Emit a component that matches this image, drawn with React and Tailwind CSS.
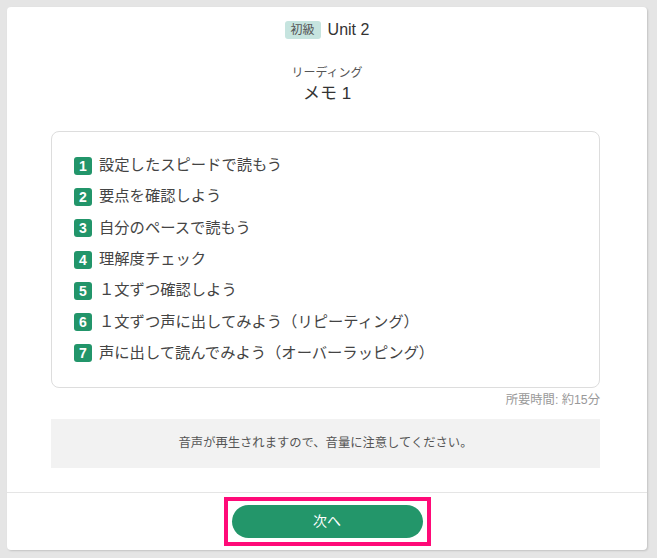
import React from 'react';

const STEPS = [
  '設定したスピードで読もう',
  '要点を確認しよう',
  '自分のペースで読もう',
  '理解度チェック',
  '１文ずつ確認しよう',
  '１文ずつ声に出してみよう（リピーティング）',
  '声に出して読んでみよう（オーバーラッピング）',
];

const FONT = { fontFamily: '"Liberation Sans", "Noto Sans CJK JP", sans-serif' };

function StepItem({ n, label }) {
  return (
    <li className="flex items-center h-[31.3px]">
      <span className="flex items-center justify-center w-[18px] h-[18px] rounded-[3px] bg-[#22956a] text-white text-[14px] font-bold leading-none">
        {n}
      </span>
      <span className="ml-[7px] text-[15.3px] text-[#444]">{label}</span>
    </li>
  );
}

export default function App() {
  return (
    <div className="min-h-screen bg-[#e5e5e5] p-[7px] pr-[10px]" style={FONT}>
      <div className="flex flex-col h-[543px] bg-white rounded-[4px] shadow-[1px_1px_2px_rgba(0,0,0,0.15)]">
        <div className="flex-1 flex flex-col items-center pt-[13px]">
          <div className="flex items-center h-[20px]">
            <span className="px-[6px] h-[18px] flex items-center rounded-[3px] bg-[#c6e4df] text-[12px] text-[#555]">
              初級
            </span>
            <span className="ml-[7px] text-[16px] text-[#333]">Unit 2</span>
          </div>

          <div className="mt-[25px] text-[12px] text-[#555] leading-[16px]">リーディング</div>
          <div className="mt-[2px] text-[17px] text-[#333] leading-[22px]">メモ 1</div>

          <div className="self-stretch ml-[44px] mr-[47px] mt-[26px] border border-[#ddd] rounded-[8px] pl-[22px] pt-[18px] pb-[18px]">
            <ul>
              {STEPS.map((s, i) => (
                <StepItem key={i} n={i + 1} label={s} />
              ))}
            </ul>
          </div>

          <div className="self-stretch ml-[44px] mr-[47px] mt-[4px] text-right text-[12.3px] text-[#999] leading-[16px]">
            所要時間: 約15分
          </div>

          <div className="self-stretch ml-[44px] mr-[47px] mt-[11px] h-[49px] flex items-center justify-center bg-[#f2f2f2] text-[12.3px] text-[#555]">
            音声が再生されますので、音量に注意してください。
          </div>
        </div>

        <div className="h-[58px] border-t border-[#e5e5e5] flex justify-center pt-[4px]">
          <div className="h-[49px] w-[207px] border-[4px] border-[#ff0a78] p-[4px]">
            <button className="w-full h-full rounded-full bg-[#23966a] text-white text-[14px]">
              次へ
            </button>
          </div>
        </div>
      </div>
    </div>
  );
}
